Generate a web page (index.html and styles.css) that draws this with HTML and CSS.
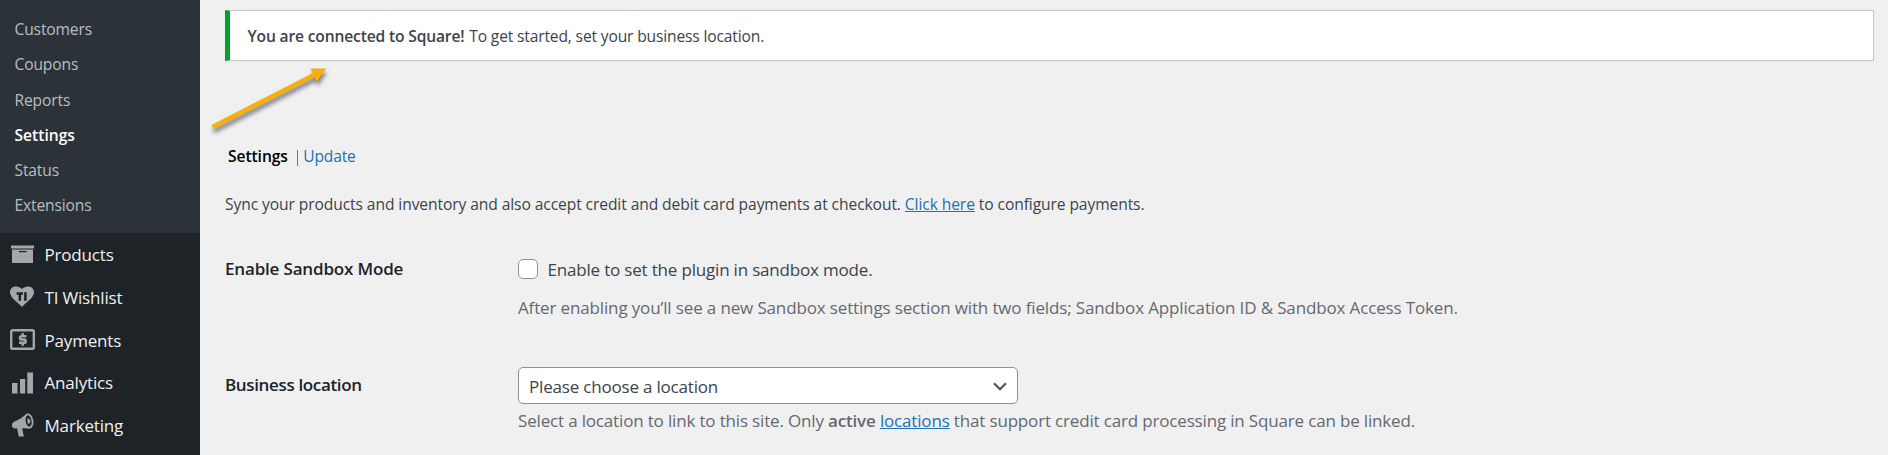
FILE: index.html
```html
<!DOCTYPE html>
<html lang="en">
<head>
<meta charset="utf-8">
<title>Square settings</title>
<link rel="stylesheet" href="styles.css">
</head>
<body>
<div class="admin">
  <nav class="sidebar">
    <ul class="submenu">
      <li>Customers</li>
      <li>Coupons</li>
      <li>Reports</li>
      <li class="current">Settings</li>
      <li>Status</li>
      <li>Extensions</li>
    </ul>
    <ul class="menu">
      <li><svg class="icon" viewBox="0 0 26 26"><path d="M1 4.500h23v3H1zM2 8.500h21v13.500H2z"/><path class="cut" d="M9 10.600h7.500"/></svg><span>Products</span></li>
      <li><svg class="icon" viewBox="0 0 26 26"><path d="M12 23C8 18.500 0 14 0 8 0 2 8 .500 12 5c4-4.500 12-3 12 3C24 14 16 18.500 12 23z"/><path class="cut bold" d="M6.600 9.600h6.400M9.800 9.600v7.200M15.400 8.300v8.500"/></svg><span>TI Wishlist</span></li>
      <li><svg class="icon" viewBox="0 0 26 26"><rect class="line" x="1.200" y="3.200" width="22.600" height="18.600" rx="1.500"/><path class="line thick" d="M16.400 9.200h-4.800a1.600 1.600 0 0 0 0 3.300h2.400a1.600 1.600 0 0 1 0 3.300H9M12.700 6.300v2.900M12.700 15.800v2.900"/></svg><span>Payments</span></li>
      <li><svg class="icon" viewBox="0 0 26 26"><path d="M2 13h5.500v10.500H2zM10 9h5.200v14.500H10zM17.300 2.500H23v21h-5.700z"/></svg><span>Analytics</span></li>
      <li><svg class="icon" viewBox="0 0 26 26"><path d="M17 .800C12.500 4.500 8.500 7 4 8.800c-3 1.400-2.600 6.600.800 6.600L7 15.300l1.800 8.100h5l-1.600-8.200c3-.200 5.400.300 7.300.200z"/><ellipse class="horn" cx="18.600" cy="8" rx="3.900" ry="6.600" transform="rotate(-10 18.600 8)"/><path d="M17.200 5.500c2 0 3.200 1 3.200 2.700s-1 2.600-2.600 2.500z"/></svg><span>Marketing</span></li>
    </ul>
  </nav>
  <main class="content">
    <div class="notice"><strong>You are connected to Square!</strong> To get started, set your business location.</div>
    <svg class="arrow" viewBox="0 0 130 80"><g><path d="M6.500 67 L109 14.500"/><path class="head" d="M104.500 8.500H120L110.500 22z"/></g></svg>
    <div class="tabs"><strong>Settings</strong><i></i><a>Update</a></div>
    <p class="intro">Sync your products and inventory and also accept credit and debit card payments at checkout. <a>Click here</a> to configure payments.</p>
    <div class="form">
      <div class="row sandbox">
        <div class="label">Enable Sandbox Mode</div>
        <div class="field">
          <label class="check"><b class="box"></b><span>Enable to set the plugin in sandbox mode.</span></label>
          <p class="help">After enabling you’ll see a new Sandbox settings section with two fields; Sandbox Application ID &amp; Sandbox Access Token.</p>
        </div>
      </div>
      <div class="row location">
        <div class="label">Business location</div>
        <div class="field">
          <div class="select"><span>Please choose a location</span><svg class="chevron" viewBox="0 0 14 9"><path d="M1 1.200l6 6 6-6"/></svg></div>
          <p class="help">Select a location to link to this site. Only <strong>active</strong> <a>locations</a> that support credit card processing in Square can be linked.</p>
        </div>
      </div>
    </div>
  </main>
</div>
</body>
</html>
```
FILE: styles.css
```css
* { box-sizing: border-box; }
body {
  margin: 0;
  background: #f0f0f1;
  color: #3c434a;
  font-family: "Open Sans", "Noto Sans", sans-serif;
  font-size: 15.6px;
}
ul, p { margin: 0; padding: 0; list-style: none; }
a { color: #2271b1; }
strong { font-weight: 600; }
.admin { display: flex; height: 455px; overflow: hidden; }
.sidebar { width: 200px; flex: none; background: #1d2327; }
.submenu {
  height: 233px;
  padding: 12px 0 0 14.500px;
  background: #2c3338;
  color: #b9bdc0;
  letter-spacing: -.140px;
}
.submenu li { height: 35.300px; line-height: 35.300px; }
.submenu .current { color: #fff; font-weight: 600; letter-spacing: 0; }
.menu { color: #f0f0f1; font-size: 17px; letter-spacing: -.180px; }
.menu li { display: flex; align-items: center; height: 42.800px; padding-left: 10px; line-height: 43px; }
.icon { width: 26px; height: 26px; margin-right: 8.500px; fill: #a2a7ab; }
.cut { stroke: #1d2327; stroke-width: 1.300; fill: none; }
.cut.bold { stroke-width: 2.500; }
.line { fill: none; stroke: #a2a7ab; stroke-width: 2.400; }
.line.thick { stroke-width: 2.600; }
.horn { fill: #1d2327; stroke: #a2a7ab; stroke-width: 1.800; }
.content { position: relative; flex: 1; padding: 10px 14px 0 25px; }
.notice {
  height: 51px;
  padding-left: 17.500px;
  border: 1px solid #c3c4c7;
  border-left: 5px solid #00a32a;
  background: #fff;
  line-height: 50px;
  letter-spacing: -.155px;
}
.notice strong { margin-right: 1px; }
.arrow { position: absolute; left: 6px; top: 60px; width: 130px; height: 80px; overflow: visible; }
.arrow g { fill: none; stroke: #f9ae0b; stroke-width: 4.600; filter: drop-shadow(1px 4px 2px rgba(40, 40, 60, .6)); }
.arrow .head { fill: #f9ae0b; stroke: none; }
.tabs { display: flex; align-items: center; margin-top: 80px; height: 31px; padding-left: 3px; line-height: 31px; letter-spacing: -.070px; }
.tabs strong { color: #000; }
.tabs i { width: 1px; height: 16px; margin: 2px 5px 0 9.500px; background: #777; }
.tabs a { letter-spacing: -.200px; }
.intro { height: 32px; margin-top: 16px; line-height: 32px; letter-spacing: -.089px; }
.intro a, .help a { text-decoration: underline; }
.form { font-size: 17px; }
.row { display: flex; }
.label { width: 293px; flex: none; color: #1d2327; font-weight: 600; line-height: 30px; letter-spacing: -.170px; }
.location .label { padding-top: 3px; letter-spacing: -.350px; }
.sandbox { height: 113px; margin-top: 34px; }
.check { display: flex; align-items: center; height: 30px; letter-spacing: -.185px; }
.box { width: 20px; height: 20px; margin-right: 9.500px; border: 1px solid #8c8f94; border-radius: 5px; background: #fff; }
.help { color: #646970; line-height: 31px; letter-spacing: -.144px; }
.sandbox .help { margin-top: 8px; }
.location .help { margin-top: 1px; letter-spacing: -.167px; }
.select { display: flex; align-items: center; justify-content: space-between; width: 500px; height: 37px; padding: 1px 10px 0; border: 1px solid #8c8f94; border-radius: 5px; background: #fff; letter-spacing: -.190px; }
.chevron { width: 14px; height: 9px; fill: none; stroke: #50575e; stroke-width: 2.300; }
```
